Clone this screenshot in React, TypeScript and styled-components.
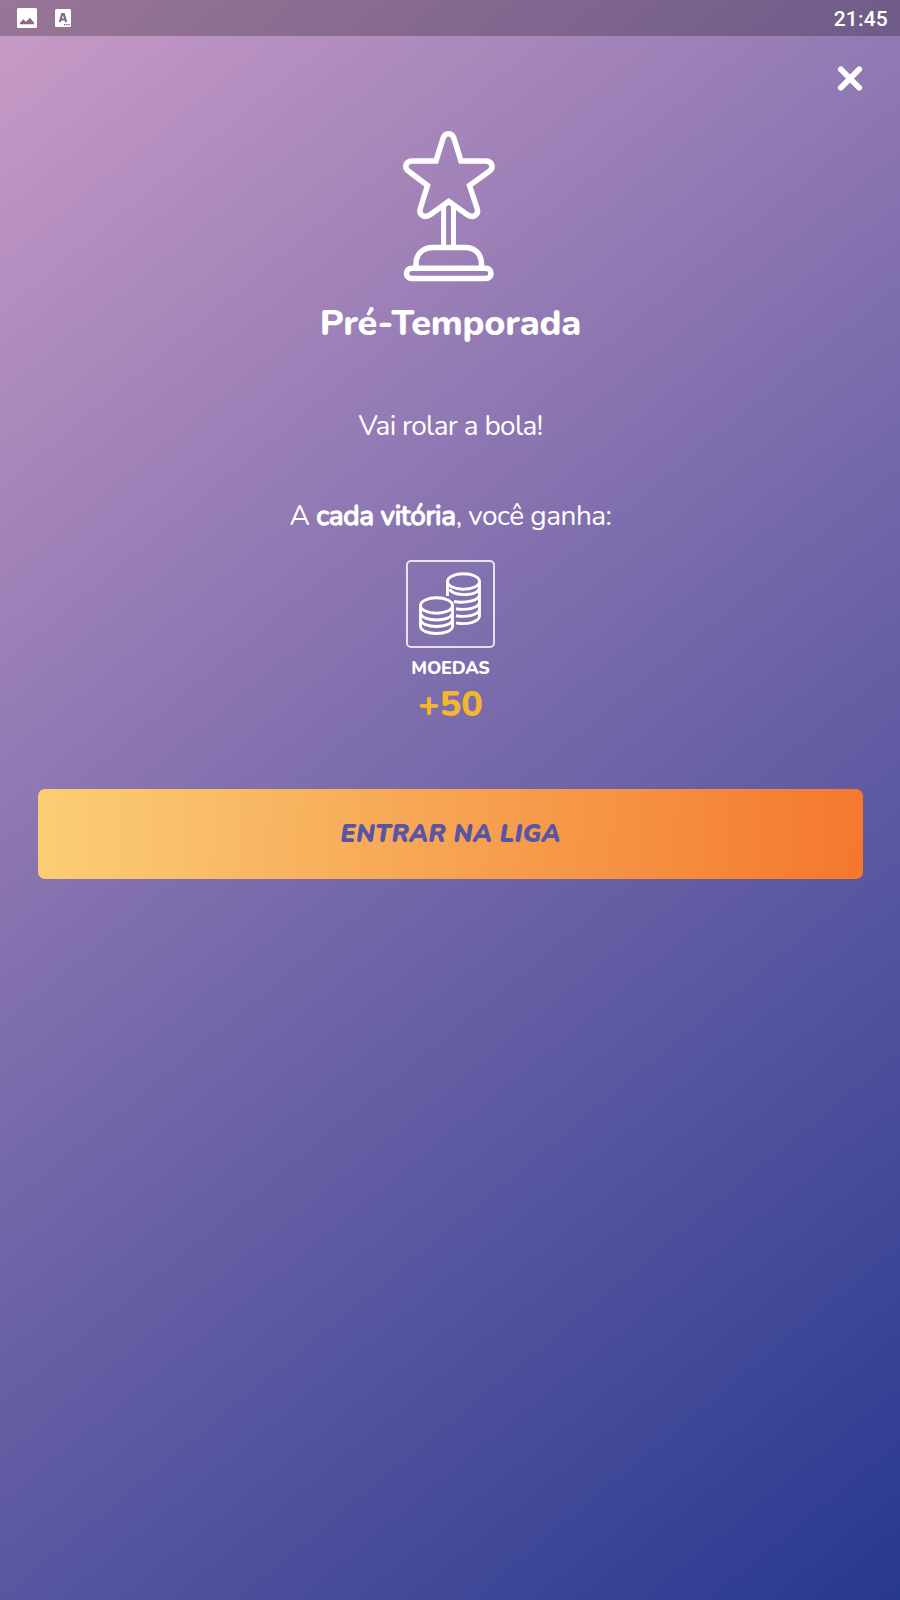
import React from "react";
import styled, { createGlobalStyle } from "styled-components";

const Global = createGlobalStyle`
  *, *::before, *::after { box-sizing: border-box; }
  html, body { margin: 0; padding: 0; }
`;

const Screen = styled.div`
  width: 900px;
  height: 1600px;
  overflow: hidden;
  display: flex;
  flex-direction: column;
  color: #fff;
  font-family: "Nunito", "Open Sans", "Noto Sans", sans-serif;
  background: linear-gradient(140.5deg, #c99bc6 0%, #7568aa 50%, #27388f 100%);
`;

const StatusBar = styled.header`
  height: 36px;
  flex: none;
  display: flex;
  align-items: center;
  justify-content: space-between;
  padding: 0 12px 0 17px;
  background: rgba(0, 0, 0, 0.24);
`;

const Notifications = styled.div`
  display: flex;
  align-items: center;
  gap: 18px;
  svg { display: block; }
`;

const Clock = styled.time`
  font: 500 21px/36px Roboto, sans-serif;
  letter-spacing: 0.2px;
  padding-top: 1px;
`;

const TopBar = styled.div`
  display: flex;
  justify-content: flex-end;
  height: 94px;
  flex: none;
  padding: 29px 36px 0 0;
`;

const CloseButton = styled.button`
  width: 28px;
  height: 28px;
  padding: 0;
  border: 0;
  background: none;
  color: inherit;
  svg { display: block; }
`;

const Content = styled.main`
  display: flex;
  flex-direction: column;
  align-items: center;
  padding: 0 37px 0 38px;
  svg { display: block; }
`;

const Trophy = styled.svg`
  margin-right: 4px;
`;

const Title = styled.h1`
  margin: 18px 0 0;
  font-size: 36px;
  line-height: 48px;
  font-weight: 800;
  letter-spacing: -0.2px;
`;

const Message = styled.p<{ $top: number; $spacing: number }>`
  margin: ${(p) => p.$top}px 0 0;
  font-size: 28px;
  line-height: 40px;
  font-weight: 400;
  letter-spacing: ${(p) => p.$spacing}px;
  white-space: nowrap;
`;

const Strong = styled.strong`
  font-weight: 400;
  letter-spacing: -0.33px;
  -webkit-text-stroke: 1.3px currentColor;
`;

const RewardBox = styled.div`
  width: 89px;
  height: 88px;
  margin-top: 24px;
  border: 2px solid rgba(255, 255, 255, 0.8);
  border-radius: 5px;
`;

const RewardName = styled.div`
  margin-top: 7px;
  font-size: 18px;
  line-height: 26px;
  font-weight: 800;
  letter-spacing: -0.2px;
`;

const RewardValue = styled.div`
  font-size: 36px;
  line-height: 48px;
  font-weight: 800;
  color: #f3b62f;
`;

const JoinButton = styled.button`
  width: 100%;
  height: 90px;
  margin-top: 60px;
  padding: 0;
  border: 0;
  border-radius: 7px;
  background: linear-gradient(94deg, #fbce76 0%, #f7a352 50%, #f4782d 100%);
  color: #5a55a3;
  font-family: inherit;
  font-size: 25px;
  line-height: 34px;
  font-weight: 900;
  font-style: italic;
  letter-spacing: 0.25px;
`;

const PictureIcon = () => (
  <svg width="20" height="20" viewBox="0 0 20 20">
    <rect width="20" height="20" rx="1.5" fill="#fff" />
    <path fill="#886a8c" d="M3 16.2V14.800L6.300 11.300 9 13.800 13 9.800 17 14.500V16.200Z" />
  </svg>
);

const LetterIcon = () => (
  <svg width="16" height="18" viewBox="0 0 16 18">
    <rect width="16" height="18" rx="1.5" fill="#fff" />
    <path d="M4.800 13 7.200 5h1.600l2.400 8M5.700 10.500h4.600" fill="none" stroke="#836689" strokeWidth="2.200" />
    <path d="M9 15.700h6" stroke="#836689" strokeWidth="1.200" strokeDasharray="1.500 .7" />
  </svg>
);

const CloseIcon = () => (
  <svg width="28" height="28" viewBox="0 0 28 28">
    <path d="M4.800 4.300 23.200 22.700M23.200 4.300 4.800 22.700" stroke="#fff" strokeWidth="5.800" strokeLinecap="round" />
  </svg>
);

const TrophyIcon = () => (
  <Trophy width="94" height="152" viewBox="402 130 94 152" fill="none" stroke="#fff" strokeWidth="5.500">
    <path d="M436 161 442.500 140C444.500 131.500 452.500 131.500 454.500 140L461 161H485.500C492.500 161 494 168 489 171.500L469.500 185.500 477 208C479.500 215.500 472.500 218.500 467 214.500L448.700 201.500 430.500 214.500C425 218.500 418 215.500 420.500 208L427.500 185.500 409 171.500C403.500 168 405.500 161 412.500 161Z" />
    <path d="M443.600 204V247M453.500 204V247" strokeWidth="5" />
    <path d="M416 268V264C416 254 423 247.500 433 247.500H465C475 247.500 481.500 254 481.500 264V268" />
    <rect x="406.500" y="268.300" width="84.500" height="10.200" rx="5.100" />
  </Trophy>
);

const CoinsIcon = () => (
  <svg width="85" height="84" viewBox="408 562 85 84" fill="none" stroke="#fff" strokeWidth="2.900">
    <ellipse cx="463.500" cy="581.500" rx="16" ry="7.800" />
    <path d="M447.500 581.500V596M479.500 581.500V616C479.500 621 468 625.500 456 622.800M449.500 589.500C456 597 479.500 596 479.500 587.500M454 601.500C464 603.500 479.500 601 479.500 594.500M456 608.800C466 610.500 479.500 608 479.500 602M456 615.800C466 617.500 479.500 615 479.500 609" />
    <ellipse cx="436.500" cy="605.500" rx="16" ry="7.800" />
    <path d="M420.500 605.500V626C420.500 636 452.500 636 452.500 626V605.500M420.500 612.500C420.500 622.500 452.500 622.500 452.500 612.500M420.500 619C420.500 629 452.500 629 452.500 619" />
  </svg>
);

export default function App() {
  return (
    <Screen>
      <Global />
      <StatusBar>
        <Notifications>
          <PictureIcon />
          <LetterIcon />
        </Notifications>
        <Clock>21:45</Clock>
      </StatusBar>
      <TopBar>
        <CloseButton aria-label="Fechar">
          <CloseIcon />
        </CloseButton>
      </TopBar>
      <Content>
        <TrophyIcon />
        <Title>Pré-Temporada</Title>
        <Message $top={58} $spacing={-0.68}>Vai rolar a bola!</Message>
        <Message $top={50} $spacing={-0.52}>
          A <Strong>cada vitória</Strong>, você ganha:
        </Message>
        <RewardBox>
          <CoinsIcon />
        </RewardBox>
        <RewardName>MOEDAS</RewardName>
        <RewardValue>+50</RewardValue>
        <JoinButton>ENTRAR NA LIGA</JoinButton>
      </Content>
    </Screen>
  );
}
